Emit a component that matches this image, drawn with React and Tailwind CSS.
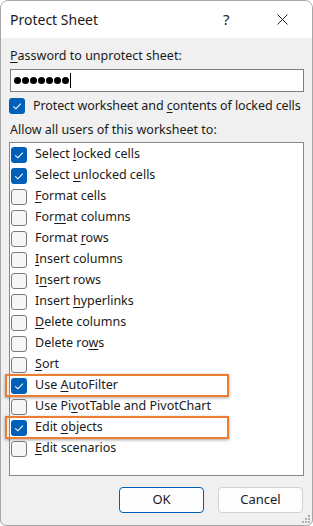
const font = { fontFamily: '"Noto Sans", "Open Sans", Arial, sans-serif' }

// 带下划线的快捷键字母
function Label({ text, hot }) {
  if (hot == null) return <span className="whitespace-nowrap">{text}</span>
  return (
    <span className="whitespace-nowrap">
      {text.slice(0, hot)}
      <span className="underline underline-offset-2">{text[hot]}</span>
      {text.slice(hot + 1)}
    </span>
  )
}

function Box({ checked }) {
  if (checked) {
    return (
      <div className="w-4 h-4 rounded-[3px] bg-[#005fb8] flex items-center justify-center shrink-0">
        <svg width="16" height="16" viewBox="0 0 16 16">
          <path d="M4.2 8.3 L6.9 10.8 L11.8 5.6" fill="none" stroke="#fff" strokeWidth="1.1" />
        </svg>
      </div>
    )
  }
  return <div className="w-4 h-4 rounded-[3px] border border-[#7a7a7a] bg-[#f6f6f6] shrink-0" />
}

const items = [
  { text: 'Select locked cells', hot: 7, checked: true },
  { text: 'Select unlocked cells', hot: 7, checked: true },
  { text: 'Format cells', hot: 0 },
  { text: 'Format columns', hot: 3 },
  { text: 'Format rows', hot: 7 },
  { text: 'Insert columns', hot: 0 },
  { text: 'Insert rows', hot: 1 },
  { text: 'Insert hyperlinks', hot: 7 },
  { text: 'Delete columns', hot: 0 },
  { text: 'Delete rows', hot: 9 },
  { text: 'Sort', hot: 0 },
  { text: 'Use AutoFilter', hot: 4, checked: true, mark: true },
  { text: 'Use PivotTable and PivotChart', hot: 6 },
  { text: 'Edit objects', hot: 5, checked: true, mark: true },
  { text: 'Edit scenarios', hot: 0 },
]

export default function App() {
  return (
    <div
      style={font}
      className="w-[313px] h-[526px] border border-[#a8a8a8] rounded-t-[8px] rounded-b-[6px] overflow-hidden bg-[#f0f0f0] text-[12.5px] text-[#1a1a1a] flex flex-col"
    >
      {/* Title bar */}
      <div className="h-[37px] bg-white flex items-center shrink-0">
        <div className="pl-[9px] text-[14px] text-[#1b1b1b] flex-1">Protect Sheet</div>
        <div className="w-[8px] text-[15px] text-[#1b1b1b] mr-[46px]">?</div>
        <svg width="11" height="11" viewBox="0 0 11 11" className="mr-[24px]">
          <path d="M0.5 0.5 L10.5 10.5 M10.5 0.5 L0.5 10.5" stroke="#222" strokeWidth="1" />
        </svg>
      </div>

      <div className="flex flex-col px-[8px]">
        <div className="mt-[10px] leading-[16px] pl-[1px]">
          <Label text="Password to unprotect sheet:" hot={0} />
        </div>
        <div className="mt-[5px] h-[23px] bg-white border border-[#7f7f7f] flex items-center pl-[3px] ml-[1px]">
          <div className="flex gap-[1px]">
            {[0, 1, 2, 3, 4, 5, 6].map((i) => (
              <div key={i} className="w-[7px] h-[7px] rounded-full bg-black" />
            ))}
          </div>
          <span className="w-px h-[15px] bg-black ml-[1px]" />
        </div>
        <div className="mt-[6px] h-[16px] flex items-center gap-[8px] tracking-[-0.1px]">
          <Box checked />
          <Label text="Protect worksheet and contents of locked cells" hot={22} />
        </div>
        <div className="mt-[8px] leading-[16px] pl-[1px]">Allow all users of this worksheet to:</div>

        {/* List */}
        <div className="mt-[4px] h-[334px] bg-white border border-[#828790] pt-[1px] flex flex-col">
          {items.map((it) => (
            <div key={it.text} className="relative h-[21px] flex items-center gap-[8px] pl-[1px] shrink-0">
              {it.mark && (
                <div className="absolute left-[-5px] top-[-1px] w-[224px] h-[23px] border-2 border-[#ed7d31] shadow-[0_1px_3px_rgba(0,0,0,0.35)]" />
              )}
              <Box checked={it.checked} />
              <Label text={it.text} hot={it.hot} />
            </div>
          ))}
        </div>

        {/* Buttons */}
        <div className="mt-[11px] flex justify-end gap-[14px] pr-[1px]">
          <button className="w-[85px] h-[26px] rounded-[4px] border border-[#005fb8] bg-[#fdfdfd] text-[13px] text-[#1a1a1a]">
            OK
          </button>
          <button className="w-[85px] h-[26px] rounded-[4px] border border-[#d1d1d1] bg-[#fdfdfd] text-[13px] text-[#1a1a1a]">
            Cancel
          </button>
        </div>
      </div>

      <div className="flex-1 flex justify-end items-end pr-[1px] pb-[1px]">
        <svg width="10" height="10" viewBox="0 0 10 10">
          <rect x="7" y="1" width="2" height="2" fill="#b0b0b0" />
          <rect x="4" y="4" width="2" height="2" fill="#b0b0b0" />
          <rect x="7" y="4" width="2" height="2" fill="#b0b0b0" />
          <rect x="1" y="7" width="2" height="2" fill="#b0b0b0" />
          <rect x="4" y="7" width="2" height="2" fill="#b0b0b0" />
          <rect x="7" y="7" width="2" height="2" fill="#b0b0b0" />
        </svg>
      </div>
    </div>
  )
}
